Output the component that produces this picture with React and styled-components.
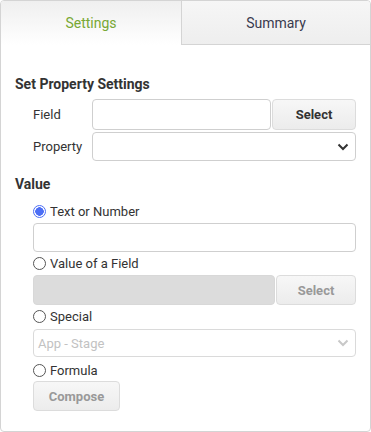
import React from 'react'
import styled, { createGlobalStyle } from 'styled-components'

const GlobalStyle = createGlobalStyle`
  body {
    margin: 0;
    background: #fff;
    font-family: Roboto, 'Liberation Sans', sans-serif;
  }
`

const Card = styled.div`
  box-sizing: border-box;
  width: 371px;
  height: 432px;
  border: 1px solid #d4d4d4;
  border-radius: 4px;
  overflow: hidden;
  background: #fff;
`

const Tabs = styled.div`
  display: flex;
  height: 44px;
`

const Tab = styled.div`
  display: flex;
  align-items: center;
  justify-content: center;
  font-size: 14px;
  color: ${(p) => (p.$active ? '#78a834' : '#3a3a4e')};
  background: ${(p) =>
    p.$active
      ? 'linear-gradient(#efefef, #ffffff)'
      : 'linear-gradient(#f6f6f6, #eeeeee)'};
  ${(p) =>
    p.$active
      ? 'width: 180px;'
      : 'flex: 1; border-left: 1px solid #d4d4d4; border-bottom: 1px solid #d4d4d4;'}
`

const Content = styled.div`
  padding: 30px 14px 0 14px;
`

const Heading = styled.div`
  font-size: 14px;
  font-weight: 700;
  line-height: 18px;
  color: #333;
  margin-top: ${(p) => p.$top || 0}px;
`

const Indent = styled.div`
  padding-left: 18px;
`

const FormRow = styled.div`
  display: grid;
  grid-template-columns: 59px 1fr;
  align-items: center;
  margin-top: ${(p) => p.$top || 0}px;
`

const Label = styled.span`
  font-size: 13px;
  color: #333;
`

const Group = styled.div`
  display: flex;
  height: ${(p) => p.$h || 30}px;
  margin-top: ${(p) => p.$top || 0}px;
`

const Input = styled.div`
  box-sizing: border-box;
  flex: 1;
  height: 100%;
  border: 1px solid ${(p) => (p.$disabled ? '#d8d8d8' : '#cfcfcf')};
  border-radius: 4px;
  background: ${(p) => (p.$disabled ? '#dcdcdc' : '#fff')};
`

const Button = styled.div`
  box-sizing: border-box;
  display: flex;
  align-items: center;
  justify-content: center;
  width: ${(p) => p.$w}px;
  height: 100%;
  margin-left: 1px;
  border: 1px solid #dcdcdc;
  border-radius: 4px;
  background: linear-gradient(#f7f7f7, #ececec);
  font-size: 13px;
  font-weight: 700;
  color: ${(p) => (p.$disabled ? '#999' : '#333')};
`

const SelectBox = styled.div`
  box-sizing: border-box;
  flex: 1;
  display: flex;
  align-items: center;
  justify-content: space-between;
  height: 100%;
  padding: 0 6px 0 4px;
  border: 1px solid ${(p) => (p.$disabled ? '#dadada' : '#cfcfcf')};
  border-radius: 4px;
  background: #fff;
  font-size: 13px;
  color: #c2c2c2;
`

const RadioRow = styled.label`
  display: flex;
  align-items: center;
  gap: 4px;
  height: 18px;
  margin-top: ${(p) => p.$top || 0}px;
  font-size: 13px;
  color: #333;
`

const RadioDot = styled.span`
  box-sizing: border-box;
  width: 13px;
  height: 13px;
  border-radius: 50%;
  border: ${(p) => (p.$checked ? '1.5px solid #4c6ef5' : '1px solid #555')};
  background: ${(p) =>
    p.$checked ? 'radial-gradient(circle, #4c6ef5 0 4px, #fff 4.5px)' : '#fff'};
`

const ComposeButton = styled(Button)`
  width: 87px;
  height: 30px;
  margin-left: 0;
  margin-top: 2px;
`

const Chevron = ({ color }) => (
  <svg width="12" height="8" viewBox="0 0 12 8">
    <path d="M1.5 1.5 L6 6 L10.5 1.5" fill="none" stroke={color} strokeWidth="2" />
  </svg>
)

const Radio = ({ checked, label, top }) => (
  <RadioRow $top={top}>
    <RadioDot $checked={checked} />
    {label}
  </RadioRow>
)

export default function App() {
  return (
    <>
      <GlobalStyle />
      <Card>
        <Tabs>
          <Tab $active>Settings</Tab>
          <Tab>Summary</Tab>
        </Tabs>
        <Content>
          <Heading>Set Property Settings</Heading>
          <Indent>
            <FormRow $top={6}>
              <Label>Field</Label>
              <Group $h={31}>
                <Input />
                <Button $w={84}>Select</Button>
              </Group>
            </FormRow>
            <FormRow $top={2}>
              <Label>Property</Label>
              <Group $h={29}>
                <SelectBox>
                  <span />
                  <Chevron color="#333" />
                </SelectBox>
              </Group>
            </FormRow>
          </Indent>
          <Heading $top={14}>Value</Heading>
          <Indent>
            <Radio checked label="Text or Number" top={9} />
            <Group $h={29} $top={3}>
              <Input />
            </Group>
            <Radio label="Value of a Field" top={2} />
            <Group $h={30} $top={3}>
              <Input $disabled />
              <Button $w={80} $disabled>Select</Button>
            </Group>
            <Radio label="Special" top={2} />
            <Group $h={28} $top={4}>
              <SelectBox $disabled>
                App - Stage
                <Chevron color="#c8c8c8" />
              </SelectBox>
            </Group>
            <Radio label="Formula" top={4} />
            <ComposeButton $disabled>Compose</ComposeButton>
          </Indent>
        </Content>
      </Card>
    </>
  )
}
